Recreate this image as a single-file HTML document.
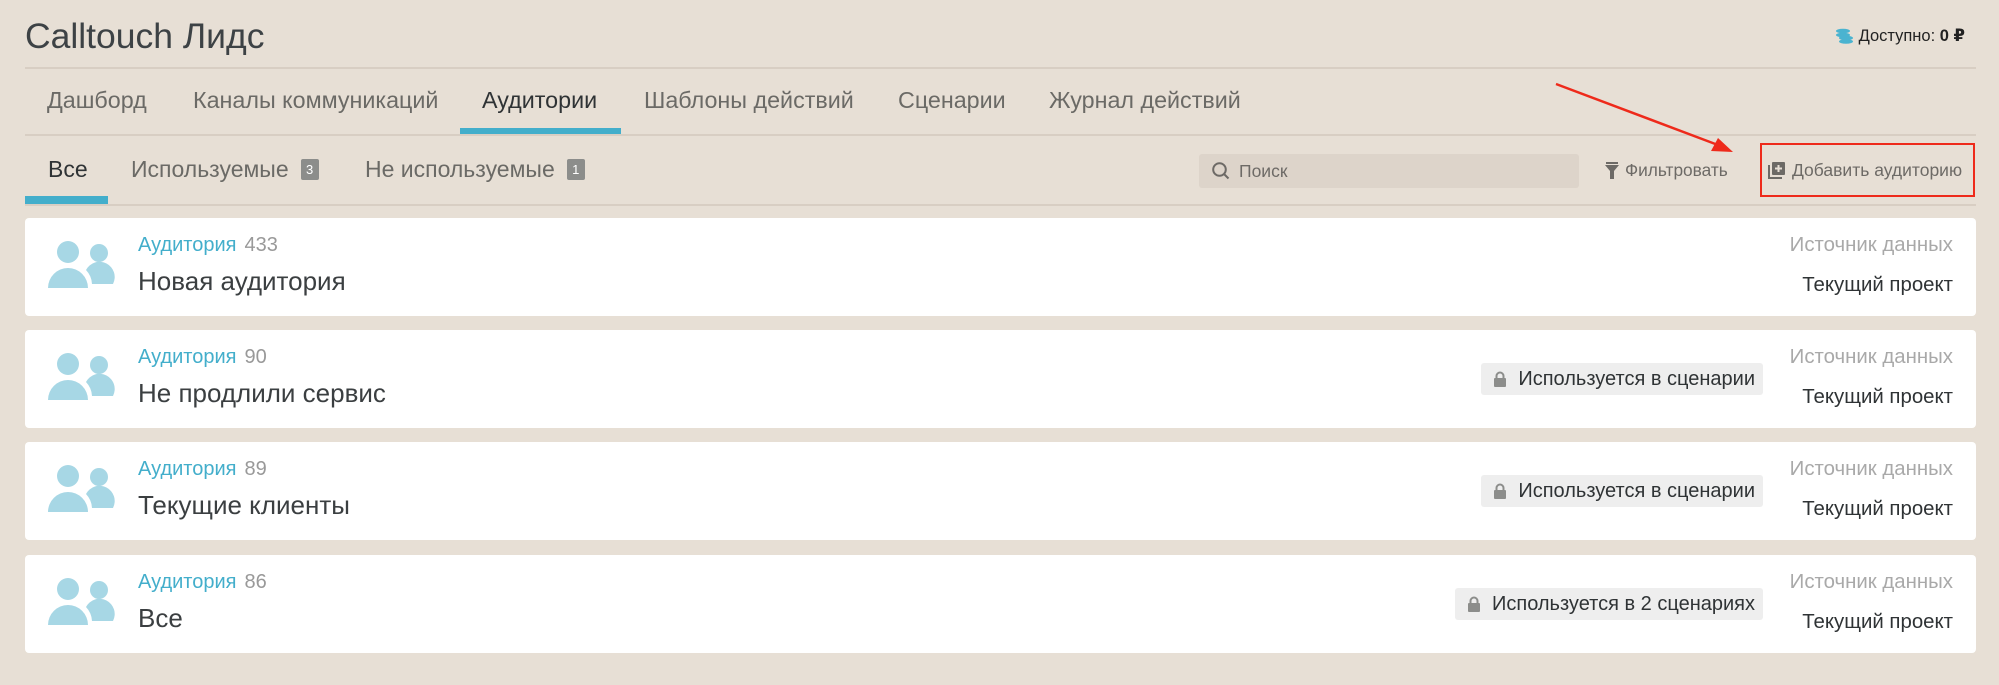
<!DOCTYPE html>
<html><head><meta charset="utf-8"><style>
*{box-sizing:border-box;margin:0;padding:0}
body{width:1999px;height:685px;background:#e7dfd5;font-family:"Liberation Sans","DejaVu Sans",sans-serif;position:relative;overflow:hidden;color:#3b3f41}
.a{position:absolute;white-space:nowrap}
.line{position:absolute;left:25px;width:1951px;height:2px;background:#d8cec3}
.title{left:25px;top:16px;font-size:35.5px;color:#3d4245}
.nav{top:87px;font-size:23.3px;color:#6b6a66}
.sub{top:156px;font-size:23px;color:#6b6a66}
.bdg{display:inline-block;background:#8c8d8b;color:#fff;font-size:13px;width:18px;height:21px;line-height:21px;text-align:center;border-radius:2px;vertical-align:3px;margin-left:12px}
.card{position:absolute;left:25px;width:1951px;height:98px;background:#fff;border-radius:4px}
.card svg{position:absolute;left:23px;top:22px}
.lab{position:absolute;left:113px;top:16px;font-size:20px;color:#43aecb;white-space:nowrap}
.lab span{color:#999;margin-left:8px}
.nm{position:absolute;left:113px;top:48px;font-size:26px;color:#3b3f41;white-space:nowrap}
.src{position:absolute;right:23px;top:16px;font-size:20.4px;color:#a9a9a9}
.cur{position:absolute;right:23px;top:56px;font-size:20.4px;color:#2f3335}
.use{position:absolute;top:33px;right:213px;height:32px;background:#eeeeee;border-radius:3px;font-size:20px;line-height:32px;padding:0 8px 0 37px;color:#2f3335;white-space:nowrap}
.use svg{left:12px!important;top:8px!important}
</style></head><body>
<div class="a title">Calltouch Лидс</div>
<div class="a" style="right:34px;top:26px;font-size:16.5px;color:#222">
<svg width="20" height="16" viewBox="0 0 20 16" style="vertical-align:-3px;margin-right:4px"><g fill="#4ab3d0"><ellipse cx="8" cy="3" rx="7" ry="2.3"/><ellipse cx="8" cy="7" rx="7" ry="2.3"/><ellipse cx="11" cy="10" rx="7" ry="2.3"/><ellipse cx="11" cy="13.5" rx="7" ry="2.3"/></g></svg>Доступно: <b>0 ₽</b></div>
<div class="line" style="top:67px"></div>
<div class="a nav" style="left:47px">Дашборд</div>
<div class="a nav" style="left:193px">Каналы коммуникаций</div>
<div class="a nav" style="left:482px;color:#2f3335">Аудитории</div>
<div class="a nav" style="left:644px">Шаблоны действий</div>
<div class="a nav" style="left:898px">Сценарии</div>
<div class="a nav" style="left:1049px">Журнал действий</div>
<div class="a" style="left:460px;top:128px;width:161px;height:6px;background:#43aecb"></div>
<div class="line" style="top:134px"></div>
<div class="a sub" style="left:48px;color:#2f3335">Все</div>
<div class="a sub" style="left:131px">Используемые<span class="bdg">3</span></div>
<div class="a sub" style="left:365px">Не используемые<span class="bdg">1</span></div>
<div class="a" style="left:25px;top:196px;width:83px;height:8px;background:#43aecb"></div>
<div class="line" style="top:204px"></div>
<div class="a" style="left:1199px;top:154px;width:380px;height:34px;background:#ddd4ca;border-radius:3px;font-size:17.5px;line-height:34px;color:#6d6a66;padding-left:40px">Поиск
<svg width="20" height="20" viewBox="0 0 20 20" style="position:absolute;left:12px;top:7px"><circle cx="8.5" cy="8.5" r="6.3" fill="none" stroke="#6d6a66" stroke-width="2"/><path d="M13 13l4.5 4.5" stroke="#6d6a66" stroke-width="2"/></svg></div>
<div class="a" style="left:1605px;top:160px;font-size:17.3px;color:#6d6a66">
<svg width="14" height="17" viewBox="0 0 14 17" style="vertical-align:-3px;margin-right:6px"><path d="M1 0h12v2H1zM0 3h14L9 9v8H5V9z" fill="#6d6a66"/></svg>Фильтровать</div>
<div class="a" style="left:1760px;top:143px;width:215px;height:54px;border:2px solid #ee2a1b"></div>
<div class="a" style="left:1768px;top:160px;font-size:17.5px;color:#6d6a66">
<svg width="17" height="17" viewBox="0 0 17 17" style="vertical-align:-3px;margin-right:7px"><path d="M0 3h2v12h12v2H0z" fill="#6d6a66"/><rect x="4" y="0" width="13" height="13" rx="1" fill="#6d6a66"/><path d="M10.5 3v7M7 6.5h7" stroke="#e7dfd5" stroke-width="2"/></svg>Добавить аудиторию</div>
<svg class="a" style="left:0;top:0" width="1999" height="685"><line x1="1556" y1="84" x2="1718" y2="145" stroke="#ee2a1b" stroke-width="2.5"/><path d="M1733 152l-22-1 7-13z" fill="#ee2a1b"/></svg>

<div class="card" style="top:218px">
<svg width="70" height="52"><g fill="#a7d7e5"><circle cx="20" cy="12" r="11"/><path d="M0 48a20 20 0 0 1 40 0z"/><circle cx="51" cy="13" r="9"/><path d="M38 30a14 14 0 0 1 27 14H44a22 22 0 0 0-6-14z"/></g></svg>
<div class="lab">Аудитория<span>433</span></div><div class="nm">Новая аудитория</div>
<div class="src">Источник данных</div><div class="cur">Текущий проект</div></div>

<div class="card" style="top:330px">
<svg width="70" height="52"><g fill="#a7d7e5"><circle cx="20" cy="12" r="11"/><path d="M0 48a20 20 0 0 1 40 0z"/><circle cx="51" cy="13" r="9"/><path d="M38 30a14 14 0 0 1 27 14H44a22 22 0 0 0-6-14z"/></g></svg>
<div class="lab">Аудитория<span>90</span></div><div class="nm">Не продлили сервис</div>
<div class="use"><svg width="14" height="16" viewBox="0 0 14 16"><path d="M3.5 7V5a3.5 3.5 0 0 1 7 0v2" fill="none" stroke="#8c8d8b" stroke-width="2"/><rect x="1" y="7" width="12" height="9" rx="1" fill="#8c8d8b"/></svg>Используется в сценарии</div>
<div class="src">Источник данных</div><div class="cur">Текущий проект</div></div>

<div class="card" style="top:442px">
<svg width="70" height="52"><g fill="#a7d7e5"><circle cx="20" cy="12" r="11"/><path d="M0 48a20 20 0 0 1 40 0z"/><circle cx="51" cy="13" r="9"/><path d="M38 30a14 14 0 0 1 27 14H44a22 22 0 0 0-6-14z"/></g></svg>
<div class="lab">Аудитория<span>89</span></div><div class="nm">Текущие клиенты</div>
<div class="use"><svg width="14" height="16" viewBox="0 0 14 16"><path d="M3.5 7V5a3.5 3.5 0 0 1 7 0v2" fill="none" stroke="#8c8d8b" stroke-width="2"/><rect x="1" y="7" width="12" height="9" rx="1" fill="#8c8d8b"/></svg>Используется в сценарии</div>
<div class="src">Источник данных</div><div class="cur">Текущий проект</div></div>

<div class="card" style="top:555px">
<svg width="70" height="52"><g fill="#a7d7e5"><circle cx="20" cy="12" r="11"/><path d="M0 48a20 20 0 0 1 40 0z"/><circle cx="51" cy="13" r="9"/><path d="M38 30a14 14 0 0 1 27 14H44a22 22 0 0 0-6-14z"/></g></svg>
<div class="lab">Аудитория<span>86</span></div><div class="nm">Все</div>
<div class="use"><svg width="14" height="16" viewBox="0 0 14 16"><path d="M3.5 7V5a3.5 3.5 0 0 1 7 0v2" fill="none" stroke="#8c8d8b" stroke-width="2"/><rect x="1" y="7" width="12" height="9" rx="1" fill="#8c8d8b"/></svg>Используется в 2 сценариях</div>
<div class="src">Источник данных</div><div class="cur">Текущий проект</div></div>
</body></html>
